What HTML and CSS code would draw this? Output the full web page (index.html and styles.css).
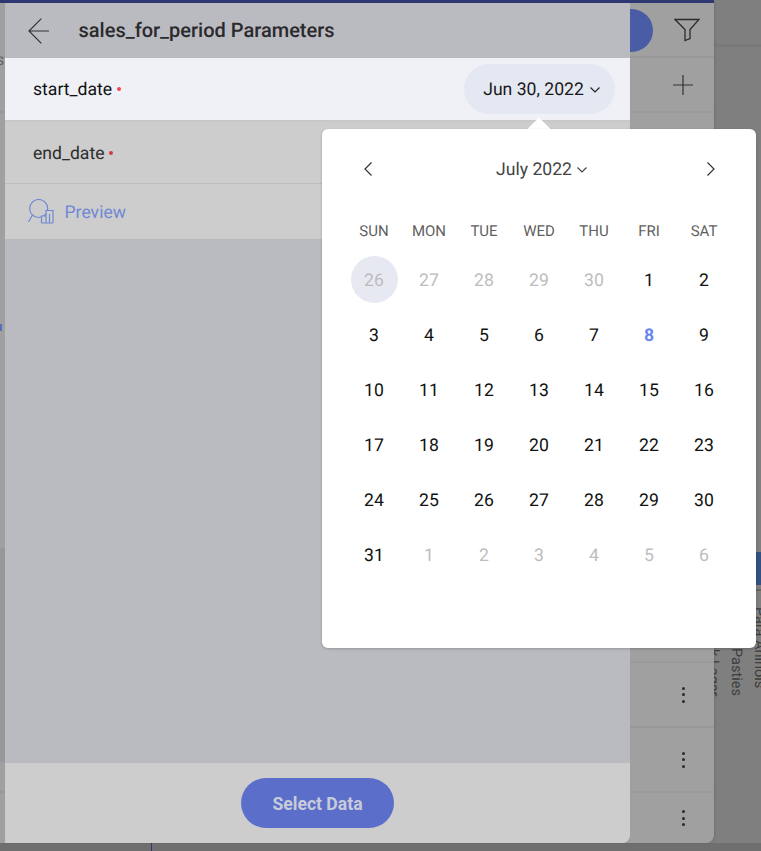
FILE: index.html
```html
<!DOCTYPE html>
<html>
<head>
	<meta charset="utf-8">
	<title>sales_for_period Parameters</title>
	<link rel="stylesheet" href="styles.css">
</head>
<body>
	<div class="stage">
		<div class="topbar"></div>
		<div class="main">
			<!-- panel behind the dialog -->
			<div class="backpanel">
				<span class="leftletter">s</span>
				<span class="leftmark"></span>
				<span class="leftshade"></span>
				<div class="backrow backhead">
					<span class="blueblob"></span>
					<svg class="icon filter" width="26" height="24" viewBox="0 0 26 24"><path d="M1 1.500h24l-9 10v9l-5 2v-11z" fill="none" stroke="#2b2b2b" stroke-width="1.300"/></svg>
				</div>
				<div class="backrow addrow">
					<svg class="icon plus" width="20" height="20" viewBox="0 0 20 20"><path d="M10 0v20M0 10h20" stroke="#333" stroke-width="1.200"/></svg>
				</div>
				<div class="backspace"></div>
				<div class="backrow dotrow"><span class="dots"><i></i><i></i><i></i></span></div>
				<div class="backrow dotrow"><span class="dots"><i></i><i></i><i></i></span></div>
				<div class="backrow dotrow last"><span class="dots"><i></i><i></i><i></i></span></div>
			</div>
			<div class="sidetext">
				<span class="sideline"></span>
				<span class="sidebar"></span>
				<span class="sidetick"></span>
				<span class="vert v1">Para Aninols</span>
				<span class="vert v2">Pasties</span>
				<span class="vert v3">k Lager</span>
			</div>
		</div>
		<div class="bottomstrip"><span class="bottomline"></span></div>

		<!-- parameters dialog -->
		<div class="dialog">
			<div class="dhead">
				<svg class="back" width="22" height="28" viewBox="0 0 22 28"><path d="M21 14H1M13.300 1.700L1 14l12.300 12.300" fill="none" stroke="#333" stroke-width="1.200"/></svg>
				<span class="dtitle">sales_for_period Parameters</span>
			</div>
			<div class="param active">
				<span class="pname">start_date</span><span class="req"></span>
				<span class="pill">Jun 30, 2022
					<svg class="chev" width="10" height="6" viewBox="0 0 10 6"><path d="M.5 .5L5 5 9.500 .5" fill="none" stroke="#222" stroke-width="1.200"/></svg>
				</span>
			</div>
			<div class="param">
				<span class="pname">end_date</span><span class="req"></span>
			</div>
			<div class="preview">
				<svg width="26" height="25" viewBox="0 0 26 25">
					<circle cx="10.700" cy="9.500" r="9" fill="none" stroke="#7088d4" stroke-width="1.200"/>
					<path d="M4.500 16L.5 23" fill="none" stroke="#7088d4" stroke-width="1.200"/>
					<path d="M13.500 24v-7h4.500v7M18 24V11.500h7V24M13.500 24H25M21.500 24v-9" fill="#cecece" stroke="#7088d4" stroke-width="1.200"/>
				</svg>
				<span class="plabel">Preview</span>
			</div>
			<div class="dbody"></div>
			<div class="dfoot">
				<button class="select">Select Data</button>
			</div>
		</div>

		<!-- date popup -->
		<span class="caret"></span>
		<div class="cal">
			<div class="calhead">
				<svg width="8" height="14" viewBox="0 0 8 14"><path d="M7.500 .5L1 7l6.500 6.500" fill="none" stroke="#333" stroke-width="1.200"/></svg>
				<span class="month">July 2022
					<svg class="chev" width="10" height="6" viewBox="0 0 10 6"><path d="M.5 .5L5 5 9.500 .5" fill="none" stroke="#444" stroke-width="1.200"/></svg>
				</span>
				<svg width="8" height="14" viewBox="0 0 8 14"><path d="M.5 .5L7 7 .5 13.500" fill="none" stroke="#333" stroke-width="1.200"/></svg>
			</div>
			<div class="weekdays">
				<span>SUN</span><span>MON</span><span>TUE</span><span>WED</span><span>THU</span><span>FRI</span><span>SAT</span>
			</div>
			<div class="days">
				<span class="off sel"><i>26</i></span><span class="off">27</span><span class="off">28</span><span class="off">29</span><span class="off">30</span><span>1</span><span>2</span>
				<span>3</span><span>4</span><span>5</span><span>6</span><span>7</span><span class="today">8</span><span>9</span>
				<span>10</span><span>11</span><span>12</span><span>13</span><span>14</span><span>15</span><span>16</span>
				<span>17</span><span>18</span><span>19</span><span>20</span><span>21</span><span>22</span><span>23</span>
				<span>24</span><span>25</span><span>26</span><span>27</span><span>28</span><span>29</span><span>30</span>
				<span>31</span><span class="off">1</span><span class="off">2</span><span class="off">3</span><span class="off">4</span><span class="off">5</span><span class="off">6</span>
			</div>
		</div>
	</div>
</body>
</html>
```

FILE: styles.css
```css
* {
	box-sizing: border-box;
}

body {
	margin: 0;
	overflow: hidden;
	font-family: Roboto, "Liberation Sans", sans-serif;
	text-rendering: geometricPrecision;
}

.stage {
	position: relative;
	width: 761px;
	height: 851px;
	background: #7f7f7f;
	display: flex;
	flex-direction: column;
	overflow: hidden;
}

.topbar {
	height: 3px;
	width: 714px;
	background: #2f3872;
	flex: none;
}

.main {
	display: flex;
	height: 840px;
	flex: none;
}

.backpanel {
	position: relative;
	z-index: 1;
	width: 714px;
	height: 840px;
	background: #a0a0a0;
	border-radius: 0 0 8px 0;
	display: flex;
	flex-direction: column;
	box-shadow: 1px 0 2px rgba(0,0,0,.12);
	flex: none;
}

.leftletter {
	position: absolute;
	left: -4px;
	top: 47px;
	font-size: 16px;
	color: #666;
}

.leftmark {
	position: absolute;
	left: 0;
	top: 321px;
	width: 2px;
	height: 7px;
	background: #5a6fb8;
}

.leftshade {
	position: absolute;
	left: 0;
	top: 545px;
	width: 5px;
	height: 214px;
	background: #989898;
}

.backrow {
	display: flex;
	align-items: center;
	justify-content: flex-end;
	border-bottom: 2px solid #999;
	flex: none;
}

.backhead {
	height: 55px;
	padding-right: 14px;
}

.blueblob {
	position: absolute;
	left: 600px;
	top: 6px;
	width: 53px;
	height: 43px;
	border-radius: 0 22px 22px 0;
	background: #4a5ca6;
}

.addrow {
	height: 55px;
	padding-right: 21px;
}

.backspace {
	height: 550px;
	border-bottom: 2px solid #999;
	flex: none;
}

.dotrow {
	height: 65px;
	padding-right: 29px;
}

.dotrow.last {
	border-bottom: 0;
	flex: 1;
}

.dots {
	display: flex;
	flex-direction: column;
	gap: 3.500px;
}

.dots i {
	width: 3px;
	height: 3px;
	border-radius: 50%;
	background: #2a2a2a;
}

.sidetext {
	position: relative;
	flex: 1;
	height: 840px;
}

.sideline {
	position: absolute;
	left: 0;
	right: 0;
	top: 41px;
	height: 3px;
	background: #7a7a7a;
}

.sidebar {
	position: absolute;
	right: 0;
	top: 549px;
	width: 47px;
	height: 33px;
	background: #33507f;
}

.sidetick {
	position: absolute;
	right: 0;
	top: 586px;
	width: 47px;
	height: 2px;
	background: #666;
}

.vert {
	position: absolute;
	writing-mode: vertical-rl;
	font-size: 14.500px;
	color: #3d3d3d;
	white-space: nowrap;
}

.v1 {
	left: 37px;
	top: 604px;
}

.v2 {
	left: 14px;
	top: 645px;
}

.v3 {
	left: -9px;
	top: 646px;
}

.bottomstrip {
	flex: 1;
	background: #6f6f6f;
	position: relative;
}

.bottomline {
	position: absolute;
	left: 151px;
	top: 0;
	width: 1px;
	height: 8px;
	background: #2f3872;
}

.dialog {
	position: absolute;
	z-index: 2;
	left: 5px;
	top: 3px;
	width: 625px;
	height: 840px;
	border-radius: 0 0 8px 0;
	overflow: hidden;
	display: flex;
	flex-direction: column;
	background: #babbc1;
}

.dhead {
	height: 55px;
	flex: none;
	display: flex;
	align-items: center;
	background: #babbc1;
	padding-left: 22.500px;
	gap: 29px;
}

.dtitle {
	padding-bottom: 2px;
	font-size: 20px;
	font-weight: 500;
	color: #2a2a2c;
}

.param {
	height: 62px;
	flex: none;
	display: flex;
	align-items: center;
	padding: 0 15px 0 28px;
	background: #cdcdcd;
	border-bottom: 1px solid #bdbdbd;
	font-size: 17.600px;
	color: #2d2d2d;
}

.param.active {
	height: 64px;
	background: #f0f1f7;
	border-bottom: 2px solid #c8c8c8;
	color: #111;
}

.pname {
	padding-top: 2px;
}

.req {
	width: 4px;
	height: 4px;
	border-radius: 50%;
	background: #d63c3c;
	margin-left: 5px;
}

.active .req {
	background: #f2474f;
}

.pill {
	margin-left: auto;
	width: 151px;
	height: 50px;
	padding: 2px 0 0 4px;
	border-radius: 25px;
	background: #e4e8f3;
	display: flex;
	align-items: center;
	justify-content: center;
	gap: 6px;
	color: #1a1a1a;
}

.preview {
	height: 55px;
	flex: none;
	display: flex;
	align-items: center;
	padding-left: 23px;
	gap: 10.500px;
	background: #cdcdcd;
	color: #7088d4;
	font-size: 17.600px;
}

.plabel {
	padding-top: 2px;
}

.dbody {
	flex: 1;
	background: #babbc1;
}

.dfoot {
	height: 80px;
	flex: none;
	background: #cdcdcd;
	display: flex;
	align-items: center;
	justify-content: center;
}

.select {
	width: 153px;
	height: 50px;
	padding: 2px 0 0;
	border: 0;
	border-radius: 25px;
	background: #5b6fca;
	color: #c8cbd9;
	font-family: inherit;
	font-size: 17.600px;
	font-weight: 700;
}

.caret {
	position: absolute;
	z-index: 3;
	left: 528px;
	top: 122px;
	width: 22px;
	height: 22px;
	background: #fff;
	transform: rotate(45deg);
}

.cal {
	position: absolute;
	z-index: 3;
	left: 322px;
	top: 129px;
	width: 434px;
	height: 519px;
	background: #fff;
	border-radius: 6px;
	padding: 0 24.500px;
	box-shadow: 0 1px 3px rgba(0,0,0,.2);
}

.calhead {
	height: 80px;
	display: flex;
	align-items: center;
	justify-content: space-between;
	padding: 0 16.500px 0 17.500px;
}

.month {
	display: flex;
	align-items: center;
	gap: 5px;
	margin-left: 4px;
	padding-top: 2px;
	font-size: 17.600px;
	color: #444;
}

.weekdays,
.days {
	display: grid;
	grid-template-columns: repeat(7, 55px);
	text-align: center;
}

.weekdays {
	height: 43px;
	font-size: 15px;
	color: #5f5f5f;
	align-items: center;
}

.days {
	grid-auto-rows: 55px;
	font-size: 17.600px;
	color: #111;
}

.days span {
	display: flex;
	align-items: center;
	justify-content: center;
	padding-top: 2px;
}

.days .off {
	color: #bdbdbd;
}

.days .today {
	color: #6a87f0;
	font-weight: 700;
}

.days .sel {
	padding-top: 0;
}

.sel i {
	width: 47px;
	height: 47px;
	padding-top: 2px;
	border-radius: 50%;
	background: #e6e9f2;
	display: flex;
	align-items: center;
	justify-content: center;
	font-style: normal;
}
```
